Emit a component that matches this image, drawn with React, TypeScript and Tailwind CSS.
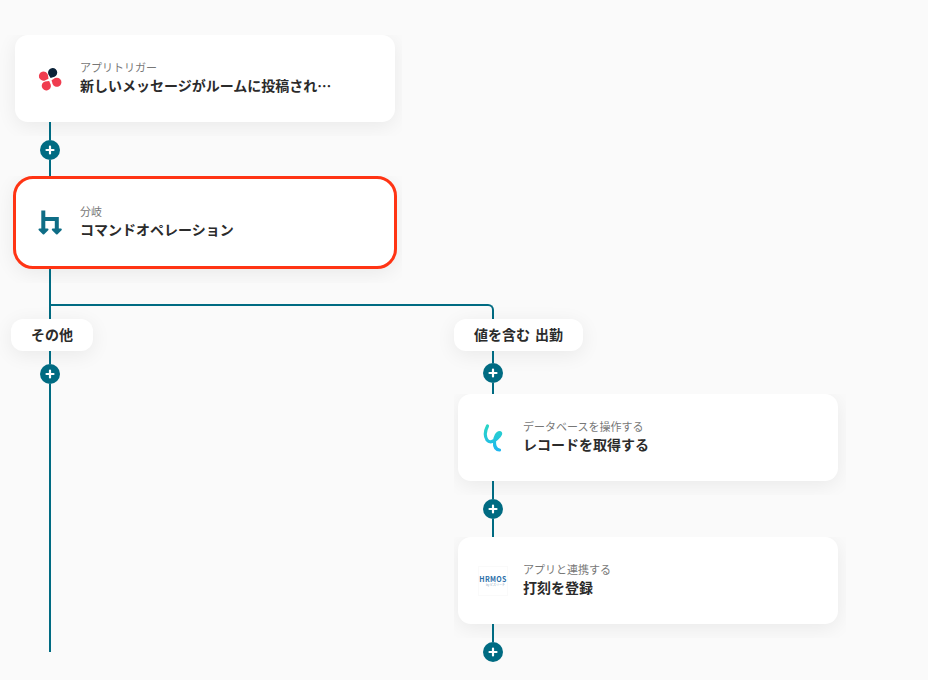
const teal = "bg-[#006b82]";
const cardShadow = "shadow-[0_4px_20px_rgba(0,0,0,0.07)]";

const Line = ({ h, ml }: { h: string; ml: string }) => <div className={`w-[2px] ${teal} ${h} ${ml}`} />;

const Plus = ({ ml }: { ml: string }) => (
  <div className={`w-5 h-5 rounded-full ${teal} flex items-center justify-center ${ml}`}>
    <svg width="10" height="10" viewBox="0 0 10 10">
      <path d="M5 1.5v7M1.5 5h7" stroke="#fff" strokeWidth="2.2" strokeLinecap="round" />
    </svg>
  </div>
);

const Petal = ({ a, c }: { a: number; c: string }) => (
  <path d="M1.2 1.2L5.2 .6A4.6 4.6 0 1 1 .6 5.2Z" fill={c} transform={`translate(15 15.5) rotate(${a})`} />
);

const ChatIcon = () => (
  <svg width="30" height="30" viewBox="0 0 30 30">
    <Petal a={-114} c="#0b2238" />
    <Petal a={-23} c="#f03c4f" />
    <Petal a={75} c="#f03c4f" />
    <Petal a={163} c="#f03c4f" />
  </svg>
);

const BranchIcon = () => (
  <svg width="30" height="30" viewBox="0 0 30 30">
    <path d="M8.3 2.5V22M8.3 11H21.8V22" fill="none" stroke="#0e6d86" strokeWidth="4" />
    <path d="M4.5 21.5H12.5L8.5 25.5Z" fill="#0e6d86" stroke="#0e6d86" strokeWidth="2" strokeLinejoin="round" />
    <path d="M17.8 21.5H25.8L21.8 25.5Z" fill="#0e6d86" stroke="#0e6d86" strokeWidth="2" strokeLinejoin="round" />
  </svg>
);

const DbIcon = () => (
  <svg width="30" height="30" viewBox="0 0 30 30">
    <defs>
      <linearGradient id="db" gradientUnits="userSpaceOnUse" x1="0" y1="2" x2="0" y2="28">
        <stop offset="0" stopColor="#2ad6c4" />
        <stop offset="1" stopColor="#1fb6f0" />
      </linearGradient>
    </defs>
    <path
      d="M9.5 3C7 8 6.5 13 9 17C11.5 20 15.5 19 19 15.5C23 12 23.5 9.5 21.5 9.5C19 9.5 17 14 16.5 18.5C16.2 23 17.5 26.5 21.5 27"
      fill="none"
      stroke="url(#db)"
      strokeWidth="3.2"
      strokeLinecap="round"
    />
  </svg>
);

const HrmosIcon = () => (
  <div className="w-[30px] h-[30px] border border-[#fafafa] flex flex-col items-center justify-center">
    <span className="text-[7px] leading-[8px] font-bold text-[#2a6ea8] tracking-[0.3px]">HRMOS</span>
    <span className="self-end mr-[2px] text-[3px] leading-[4px] text-[#8aa6bd]">by ビズリーチ</span>
  </div>
);

const Card = ({ sub, title, icon, clip }: { sub: string; title: string; icon: React.ReactNode; clip: string }) => (
  <div className={`overflow-hidden ${clip}`}>
    <div className={`w-[380px] h-[87px] rounded-[13px] bg-white ${cardShadow} flex items-center pl-5 gap-[15px]`}>
      {icon}
      <div className="flex flex-col w-[252px] pb-[3px]">
        <span className="text-[11px] leading-[16px] text-[#777]">{sub}</span>
        <span className="text-[14px] leading-[21px] font-bold text-[#2b2b2b] whitespace-nowrap">{title}</span>
      </div>
    </div>
  </div>
);

const Label = ({ text, w, ml }: { text: string; w: string; ml: string }) => (
  <div className={`h-8 rounded-[12px] bg-white ${cardShadow} flex items-center justify-center pb-[2px] text-[14px] font-bold text-[#2b2b2b] [word-spacing:2px] ${w} ${ml}`}>
    {text}
  </div>
);

export default function App() {
  return (
    <div
      className="w-[928px] h-[680px] overflow-hidden bg-[#fafafa] pt-[35px] flex flex-col"
      style={{ fontFamily: '"Noto Sans CJK JP", "Noto Sans", sans-serif' }}
    >
      <Card
        sub="アプリトリガー"
        title="新しいメッセージがルームに投稿され…"
        icon={<ChatIcon />}
        clip="w-[402px] pl-[15px] pb-[14px] -mb-[14px]"
      />
      <Line h="h-[18px]" ml="ml-[49px]" />
      <Plus ml="ml-[40px]" />
      <Line h="h-[16px]" ml="ml-[49px]" />

      <div className="w-[402px] pl-[13px] overflow-hidden pb-[14px] -mb-[14px]">
        <div className={`w-[384px] h-[93px] rounded-[20px] border-[3px] border-[#ff3414] bg-white ${cardShadow} flex items-center pl-[19px] gap-[15px]`}>
          <BranchIcon />
          <div className="flex flex-col pb-[3px]">
            <span className="text-[11px] leading-[16px] text-[#777]">分岐</span>
            <span className="text-[14px] leading-[21px] font-bold text-[#2b2b2b]">コマンドオペレーション</span>
          </div>
        </div>
      </div>

      <Line h="h-[35px]" ml="ml-[49px]" />
      <div className="ml-[49px] w-[445px] h-[15px] border-l-2 border-t-2 border-r-2 border-[#006b82] rounded-tr-[6px]" />

      <div className="flex">
        {/* その他 */}
        <div className="w-[454px] flex flex-col">
          <Label text="その他" w="w-[82px]" ml="ml-[11px]" />
          <Line h="h-[13px]" ml="ml-[49px]" />
          <Plus ml="ml-[40px]" />
          <Line h="h-[268px]" ml="ml-[49px]" />
        </div>

        {/* 値を含む */}
        <div className="flex flex-col">
          <Label text="値を含む 出勤" w="w-[129px]" ml="" />
          <Line h="h-[12px]" ml="ml-[38px]" />
          <Plus ml="ml-[29px]" />
          <Line h="h-[11px]" ml="ml-[38px]" />
          <Card
            sub="データベースを操作する"
            title="レコードを取得する"
            icon={<DbIcon />}
            clip="w-[392px] pl-[4px] pb-[14px] -mb-[14px]"
          />
          <Line h="h-[18px]" ml="ml-[38px]" />
          <Plus ml="ml-[29px]" />
          <Line h="h-[18px]" ml="ml-[38px]" />
          <Card
            sub="アプリと連携する"
            title="打刻を登録"
            icon={<HrmosIcon />}
            clip="w-[392px] pl-[4px] pb-[14px] -mb-[14px]"
          />
          <Line h="h-[18px]" ml="ml-[38px]" />
          <Plus ml="ml-[29px]" />
        </div>
      </div>
    </div>
  );
}
